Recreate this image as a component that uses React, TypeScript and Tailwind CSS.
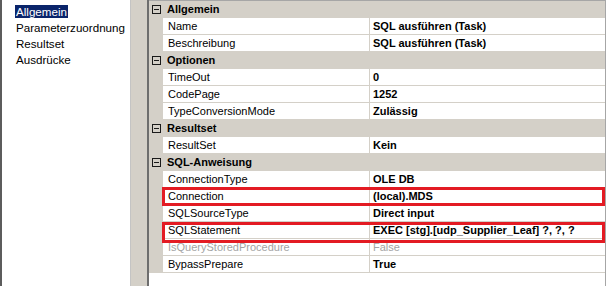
import React from "react";

type Row =
  | { kind: "cat"; label: string }
  | { kind: "prop"; name: string; value: string; disabled?: boolean };

const rows: Row[] = [
  { kind: "cat", label: "Allgemein" },
  { kind: "prop", name: "Name", value: "SQL ausführen (Task)" },
  { kind: "prop", name: "Beschreibung", value: "SQL ausführen (Task)" },
  { kind: "cat", label: "Optionen" },
  { kind: "prop", name: "TimeOut", value: "0" },
  { kind: "prop", name: "CodePage", value: "1252" },
  { kind: "prop", name: "TypeConversionMode", value: "Zulässig" },
  { kind: "cat", label: "Resultset" },
  { kind: "prop", name: "ResultSet", value: "Kein" },
  { kind: "cat", label: "SQL-Anweisung" },
  { kind: "prop", name: "ConnectionType", value: "OLE DB" },
  { kind: "prop", name: "Connection", value: "(local).MDS" },
  { kind: "prop", name: "SQLSourceType", value: "Direct input" },
  { kind: "prop", name: "SQLStatement", value: "EXEC [stg].[udp_Supplier_Leaf] ?, ?, ?" },
  { kind: "prop", name: "IsQueryStoredProcedure", value: "False", disabled: true },
  { kind: "prop", name: "BypassPrepare", value: "True" },
];

const pages = ["Allgemein", "Parameterzuordnung", "Resultset", "Ausdrücke"];

function MinusBox() {
  return (
    <div className="ml-[3px] flex h-[9px] w-[9px] items-center justify-center border border-[#1a1a1a]">
      <div className="h-px w-[5px] bg-[#1a1a1a]" />
    </div>
  );
}

export default function App() {
  return (
    <div
      className="relative flex h-[286px] w-[608px] overflow-hidden bg-white text-[11px] text-black"
      style={{ fontFamily: '"Liberation Sans", Arial, sans-serif' }}
    >
      {/* page list */}
      <div className="w-[131px] shrink-0 border-l-2 border-r border-l-[#5c5c5c] border-r-[#c4c4c4] bg-white pl-[13px] pt-[3px] text-[11.6px]">
        {pages.map((p, i) => (
          <div key={p} className="flex h-[16px] items-center">
            <span
              className={
                i === 0
                  ? "bg-[#0a246a] px-px leading-[13px] text-white"
                  : "px-px leading-[13px]"
              }
            >
              {p}
            </span>
          </div>
        ))}
      </div>

      {/* splitter */}
      <div className="w-[18px] shrink-0 border-r-2 border-[#6e6e6e] bg-[#d4d0c8]" />

      {/* property grid */}
      <div className="flex flex-1 bg-white">
        <div className="w-[457px] border-r border-t border-[#a6a6a6]">
          {rows.map((r, i) =>
            r.kind === "cat" ? (
              <div key={i} className="flex h-[17px] items-center bg-[#d4d0c8]">
                <div className="flex w-[14px] shrink-0 items-center">
                  <MinusBox />
                </div>
                <span className="pl-[4px] font-bold">{r.label}</span>
              </div>
            ) : (
              <div key={i} className="flex h-[17px] bg-[#d4d0c8]">
                <div className="w-[14px] shrink-0" />
                <div
                  className={`mb-px flex w-[206px] shrink-0 items-center bg-white pl-[5px] ${
                    r.disabled ? "text-[#a3a3a3]" : ""
                  }`}
                >
                  {r.name}
                </div>
                <div
                  className={`mb-px ml-px flex flex-1 items-center bg-white pl-[3px] ${
                    r.disabled ? "text-[#a3a3a3]" : "font-bold"
                  }`}
                >
                  {r.value}
                </div>
              </div>
            )
          )}
        </div>
      </div>

      {/* annotations */}
      <div className="pointer-events-none absolute left-[162px] top-[187px] h-[19px] w-[443px] border-[3px] border-[#e31b23]" />
      <div className="pointer-events-none absolute left-[162px] top-[222px] h-[21px] w-[443px] border-[3px] border-[#e31b23]" />
    </div>
  );
}
